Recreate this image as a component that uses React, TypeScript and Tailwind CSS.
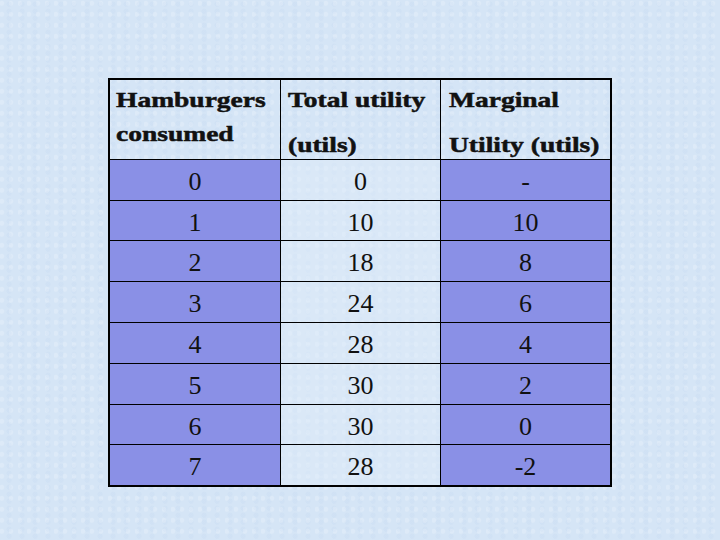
const rows: [string, string, string][] = [
  ['0', '0', '-'],
  ['1', '10', '10'],
  ['2', '18', '8'],
  ['3', '24', '6'],
  ['4', '28', '4'],
  ['5', '30', '2'],
  ['6', '30', '0'],
  ['7', '28', '-2'],
];

const rowHeights = ['h-[41px]', 'h-[40px]', 'h-[41px]', 'h-[41px]', 'h-[41px]', 'h-[41px]', 'h-[40px]', 'h-[40px]'];

const HeadLine = ({ children }: { children: React.ReactNode }) => (
  <div className="h-[34px] whitespace-nowrap leading-[34px]">
    <span className="inline-block origin-left scale-x-[1.25] [-webkit-text-stroke:0.5px_#111]">{children}</span>
  </div>
);

export default function App() {
  return (
    <div
      className="h-[540px] w-[720px] overflow-hidden bg-[#d5e5f6] pt-[78px] pl-[108px]"
      style={{
        backgroundImage:
          'radial-gradient(circle at 20% 30%, rgba(255,255,255,0.18) 0 2px, transparent 3px), radial-gradient(circle at 70% 60%, rgba(185,208,236,0.18) 0 2px, transparent 3px)',
        backgroundSize: '9px 11px, 13px 7px',
      }}
    >
      <div
        className="w-[504px] border-2 border-black text-[#111]"
        style={{ fontFamily: '"Liberation Serif", "Times New Roman", serif' }}
      >
        <div className="flex h-[80px] border-b border-black text-[22px] font-bold">
          <div className="w-[171px] border-r border-black pt-[3px] pl-[6px]">
            <HeadLine>Hamburgers</HeadLine>
            <HeadLine>consumed</HeadLine>
          </div>
          <div className="w-[160px] border-r border-black pt-[3px] pl-[7px]">
            <HeadLine>Total utility</HeadLine>
            <div className="mt-[11px]">
              <HeadLine>(utils)</HeadLine>
            </div>
          </div>
          <div className="w-[169px] pt-[3px] pl-[8px]">
            <HeadLine>Marginal</HeadLine>
            <div className="mt-[11px]">
              <HeadLine>Utility (utils)</HeadLine>
            </div>
          </div>
        </div>
        {rows.map((r, i) => (
          <div
            key={i}
            className={`flex text-[26px] ${rowHeights[i]} ${i < rows.length - 1 ? 'border-b border-black' : ''}`}
          >
            <div className="flex w-[171px] items-center justify-center border-r border-black bg-[#8a90e6] pt-[3px]">
              {r[0]}
            </div>
            <div className="flex w-[160px] items-center justify-center border-r border-black bg-[#e2edf9]/40 pt-[3px]">
              {r[1]}
            </div>
            <div className="flex w-[169px] items-center justify-center bg-[#8a90e6] pt-[3px]">
              {r[2]}
            </div>
          </div>
        ))}
      </div>
    </div>
  );
}
